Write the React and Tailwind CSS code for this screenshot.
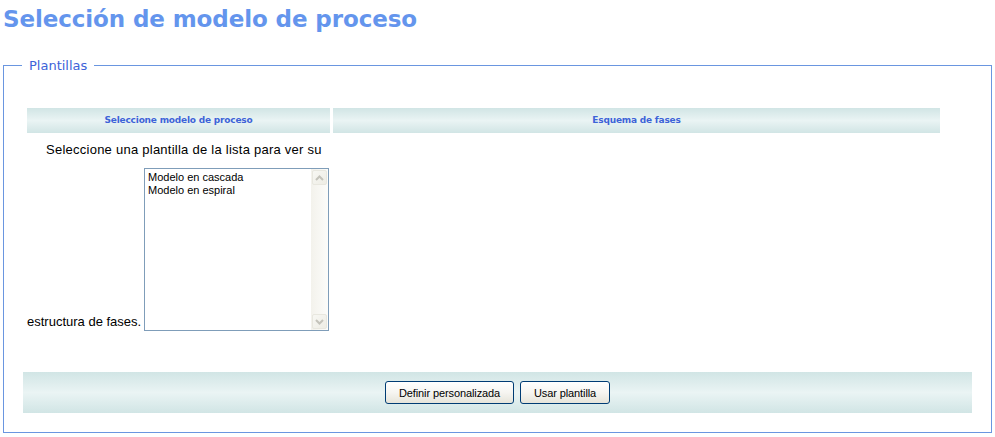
export default function App() {
  const bar = "bg-linear-to-b from-[#d1e5e5] via-[#eaf4f4] to-[#d1e5e5]";

  return (
    <div className="w-[995px] h-[437px] bg-white overflow-hidden font-['Liberation_Sans',Arial,sans-serif] text-black">
      {/* Title */}
      <h1 className="pl-[3px] pt-[4px] h-[50px] text-[23px] leading-[30px] font-bold text-[#6495ed] font-['DejaVu_Sans',Verdana,sans-serif] tracking-[-0.1px]">
        Selección de modelo de proceso
      </h1>

      {/* Plantillas */}
      <fieldset className="ml-[3px] mt-[8px] w-[989px] h-[375px] border border-[#6a96e0] px-[19px]">
        <legend className="ml-[-1px] px-[7px] text-[13px] leading-[15px] text-[#3d63d8] font-['DejaVu_Sans',Verdana,sans-serif]">
          Plantillas
        </legend>

        <div className="pt-[35px] pl-[4px] flex gap-[3px]">
          {/* Left column */}
          <div className="w-[303px]">
            <div className={`h-[25px] ${bar} flex items-center justify-center text-[9px] font-bold text-[#3d63d8] font-['DejaVu_Sans',Verdana,sans-serif] tracking-[-0.2px]`}>
              Seleccione modelo de proceso
            </div>
            <div className="pt-[9px] pl-[19px] text-[13px] leading-[15px] tracking-[0.25px] whitespace-nowrap">
              Seleccione una plantilla de la lista para ver su
            </div>
            <div className="mt-[11px] pr-[1px] flex items-end justify-between">
              <span className="text-[13px] leading-[15px] pb-[2px] whitespace-nowrap">estructura de fases.</span>
              <ListBox />
            </div>
          </div>

          {/* Right column */}
          <div className="w-[607px]">
            <div className={`h-[25px] ${bar} flex items-center justify-center text-[9px] font-bold text-[#3d63d8] font-['DejaVu_Sans',Verdana,sans-serif] tracking-[-0.2px]`}>
              Esquema de fases
            </div>
          </div>
        </div>

        {/* Button bar */}
        <div className={`mt-[41px] h-[41px] ${bar} flex items-center justify-center gap-[6px]`}>
          <XpButton className="w-[129px]">Definir personalizada</XpButton>
          <XpButton className="w-[90px]">Usar plantilla</XpButton>
        </div>
      </fieldset>
    </div>
  );
}

function ListBox() {
  return (
    <div className="shrink-0 w-[185px] h-[163px] border border-[#7f9db9] bg-white flex">
      <div className="flex-1 pl-[3px] pt-[2px] text-[11px] leading-[13px]">
        <div>Modelo en cascada</div>
        <div>Modelo en espiral</div>
      </div>
      <div className="w-[17px] bg-linear-to-r from-[#f3f2ec] to-[#fcfcfa] flex flex-col justify-between">
        <ScrollArrow up />
        <ScrollArrow />
      </div>
    </div>
  );
}

function ScrollArrow({ up }) {
  return (
    <div className="w-[17px] h-[17px] p-[1px]">
      <div className="w-[15px] h-[15px] rounded-[2px] border border-[#e8e7df] bg-linear-to-br from-[#f7f7f3] to-[#eeede5] flex items-center justify-center">
        <svg width="9" height="6" viewBox="0 0 9 6">
          <path
            d={up ? "M1 5 L4.5 1.5 L8 5" : "M1 1 L4.5 4.5 L8 1"}
            fill="none"
            stroke="#c4c3bb"
            strokeWidth="2"
          />
        </svg>
      </div>
    </div>
  );
}

function XpButton({ children, className }) {
  return (
    <button
      className={`h-[23px] rounded-[3px] border border-[#003c74] bg-linear-to-b from-[#ffffff] via-[#f6f5f1] to-[#e6e4da] text-[11px] leading-[14px] tracking-[-0.1px] text-black ${className}`}
    >
      {children}
    </button>
  );
}
